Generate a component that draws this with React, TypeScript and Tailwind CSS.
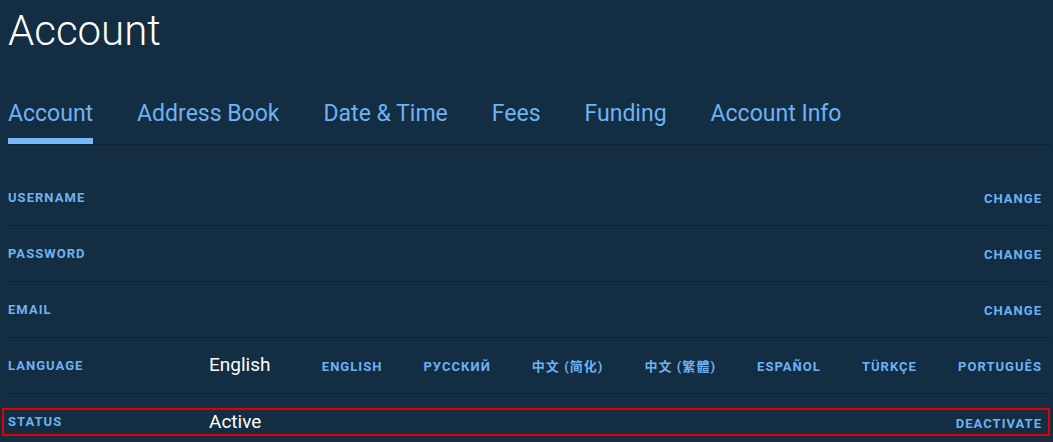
const tabs = ["Account", "Address Book", "Date & Time", "Fees", "Funding", "Account Info"];

const languages = ["English", "Русский", "中文 (简化)", "中文 (繁體)", "Español", "Türkçe", "Português"];

function Label({ children }: { children: React.ReactNode }) {
  return (
    <div className="w-[201px] shrink-0 text-[13px] font-bold uppercase tracking-[0.08em] text-[#6fb2f2]">
      {children}
    </div>
  );
}

function Action({ children }: { children: React.ReactNode }) {
  return (
    <button className="pt-[3px] text-[13px] font-bold uppercase tracking-[0.08em] text-[#6fb2f2] cursor-pointer">
      {children}
    </button>
  );
}

export default function App() {
  return (
    <main
      className="min-h-screen bg-[#132d42] pl-2 pr-[3px] text-white"
      style={{ fontFamily: "Roboto, 'Noto Sans CJK SC', sans-serif" }}
    >
      <h1 className="pt-[10px] text-[42px] font-light leading-none">Account</h1>

      <nav className="mt-[48px] flex gap-[44px] border-b border-[#0c2132]">
        {tabs.map((tab, i) => (
          <button
            key={tab}
            className={
              "pb-[10px] text-[23px] leading-[28px] text-[#6fb2f2] cursor-pointer " +
              (i === 0 ? "border-b-[6px] border-[#78b7f8]" : "border-b-[6px] border-transparent")
            }
          >
            {tab}
          </button>
        ))}
      </nav>

      <section className="mt-[25px]">
        <div className="flex h-[56px] items-center border-b border-[#0c2132] pr-2">
          <Label>Username</Label>
          <div className="flex-1" />
          <Action>Change</Action>
        </div>
        <div className="flex h-[56px] items-center border-b border-[#0c2132] pr-2">
          <Label>Password</Label>
          <div className="flex-1" />
          <Action>Change</Action>
        </div>
        <div className="flex h-[56px] items-center border-b border-[#0c2132] pr-2">
          <Label>Email</Label>
          <div className="flex-1" />
          <Action>Change</Action>
        </div>
        <div className="flex h-[56px] items-center border-b border-[#0c2132] pr-2">
          <Label>Language</Label>
          <div className="flex-1 text-[19px]">English</div>
          <div className="flex gap-[41px]">
            {languages.map((lang) => (
              <Action key={lang}>{lang}</Action>
            ))}
          </div>
        </div>
        <div className="relative flex h-[56px] items-center pr-2">
          <Label>Status</Label>
          <div className="flex-1 text-[19px]">Active</div>
          <Action>Deactivate</Action>
          <span className="pointer-events-none absolute -left-[6px] right-0 top-[14px] h-[28px] border-2 border-[#e00000]" />
        </div>
      </section>
    </main>
  );
}
